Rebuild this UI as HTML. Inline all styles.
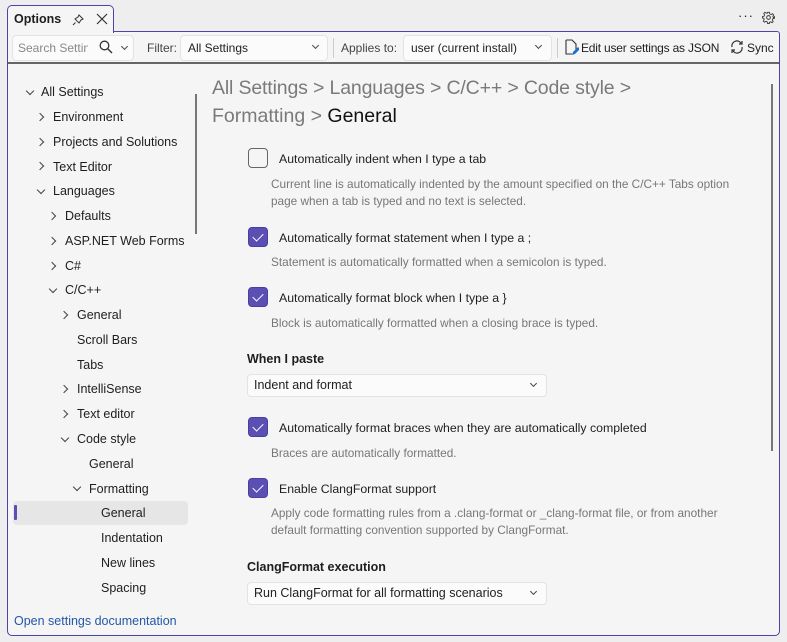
<!DOCTYPE html>
<html><head><meta charset="utf-8"><style>
*{box-sizing:border-box;margin:0;padding:0}
body{width:787px;height:642px;background:#eeeeee;font-family:"Liberation Sans",sans-serif;font-size:12.5px;color:#1e1e1e;position:relative;overflow:hidden}
.a{position:absolute;white-space:nowrap}
.frame{position:absolute;left:7px;top:31px;width:773px;height:605px;border:1.5px solid #4e43a8;border-radius:0 3px 5px 5px;background:#f5f5f5}
.tab{position:absolute;left:7px;top:5px;width:107px;height:28px;border:1.5px solid #4e43a8;border-bottom:none;border-radius:5px 5px 0 0;background:#f5f5f5;z-index:2}
.box{position:absolute;background:#fbfbfb;border:1px solid #e3e3e3;border-radius:4px}
.chev{position:absolute;width:6px;height:6px;border-right:1.3px solid #444;border-bottom:1.3px solid #444}
.r{transform:rotate(-45deg)}.d{transform:rotate(45deg)}
.cb{position:absolute;left:248px;width:20px;height:20px;border-radius:4px;background:#5b4fb3;border:1px solid #4a3fa0}
.cb::after{content:"";position:absolute;left:6px;top:3px;width:5px;height:9px;border-right:1.6px solid #fff;border-bottom:1.6px solid #fff;transform:rotate(45deg)}
.lbl{position:absolute;left:279px;font-size:12.3px;color:#1e1e1e}
.desc{position:absolute;left:271px;font-size:11.8px;color:#777;line-height:17px}
.h{position:absolute;left:212px;font-size:19.5px;color:#7a7a7a}
.tb{font-size:12px}
</style></head><body>
<div class="tab"><span class="a" style="left:6px;top:6px;font-weight:bold;font-size:12.5px">Options</span>
<svg class="a" style="left:64px;top:8px" width="12" height="12" viewBox="0 0 12 12"><path d="M7 1l4 4-2 1-2 3-4-4 3-2z M3.5 8.5L1 11" fill="none" stroke="#333" stroke-width="1"/></svg>
<svg class="a" style="left:88px;top:7px" width="12" height="12" viewBox="0 0 12 12"><path d="M1 1l10 10M11 1L1 11" stroke="#333" stroke-width="1.2"/></svg></div>
<span class="a" style="left:738px;top:8px;font-size:13px;letter-spacing:1px">···</span>
<svg class="a" style="left:762px;top:11px" width="13" height="13" viewBox="0 0 14 14"><circle cx="7" cy="7" r="2" fill="none" stroke="#333"/><path d="M6 1h2l.4 1.8 1.6.8 1.6-1 1.4 1.4-1 1.6.7 1.6L14 6v2l-1.8.4-.7 1.6 1 1.6-1.4 1.4-1.6-1-1.6.7L8 14H6l-.4-1.8L4 11.5l-1.6 1L1 11.1l1-1.6L1.7 8 0 7.6V6l1.8-.4.7-1.6-1-1.6L2.9 1l1.6 1L6 1.8z" fill="none" stroke="#333" stroke-width="1" transform="scale(.93) translate(.5 .5)"/></svg>
<div class="frame"></div>
<div class="box" style="left:12px;top:35px;width:122px;height:26px"></div>
<span class="a tb" style="left:18px;top:41px;color:#888;width:70px;overflow:hidden">Search Settings</span>
<svg class="a" style="left:99px;top:40px" width="14" height="14" viewBox="0 0 14 14"><circle cx="5.5" cy="5.5" r="4.3" fill="none" stroke="#333" stroke-width="1.3"/><path d="M8.6 8.6L13 13" stroke="#333" stroke-width="1.4"/></svg>
<div class="chev d" style="left:122px;top:44px;width:5px;height:5px"></div>
<span class="a tb" style="left:147px;top:41px;color:#444">Filter:</span>
<div class="box" style="left:180px;top:35px;width:148px;height:26px"></div>
<span class="a tb" style="left:188px;top:41px">All Settings</span>
<div class="chev d" style="left:313px;top:43px;width:5px;height:5px"></div>
<div class="a" style="left:333px;top:38px;width:1px;height:20px;background:#ccc"></div>
<span class="a tb" style="left:341px;top:41px;color:#444">Applies to:</span>
<div class="box" style="left:403px;top:35px;width:149px;height:26px"></div>
<span class="a tb" style="left:411px;top:41px">user (current install)</span>
<div class="chev d" style="left:536px;top:43px;width:5px;height:5px"></div>
<div class="a" style="left:557px;top:38px;width:1px;height:20px;background:#ccc"></div>
<svg class="a" style="left:565px;top:39px" width="14" height="17" viewBox="0 0 14 17"><path d="M1 1h6l4 4v6M1 1v14h6" fill="none" stroke="#333" stroke-width="1.1"/><path d="M7 16l1-3 5-5 2 2-5 5z" fill="#1f6fd1"/></svg>
<span class="a tb" style="left:581px;top:41px;letter-spacing:-.2px">Edit user settings as JSON</span>
<svg class="a" style="left:730px;top:40px" width="14" height="14" viewBox="0 0 14 14"><path d="M11.5 4A5 5 0 0 0 2 7M2.5 10A5 5 0 0 0 12 7M9 4h3V1M5 10H2v3" fill="none" stroke="#333" stroke-width="1.2"/></svg>
<span class="a tb" style="left:747px;top:41px">Sync</span>
<div class="a" style="left:8px;top:62px;width:771px;height:1.5px;background:#666"></div>

<div class="chev d" style="left:27px;top:88px"></div><span class="a" style="left:41px;top:85px">All Settings</span>
<div class="chev r" style="left:37px;top:114px"></div><span class="a" style="left:53px;top:110px">Environment</span>
<div class="chev r" style="left:37px;top:139px"></div><span class="a" style="left:53px;top:135px">Projects and Solutions</span>
<div class="chev r" style="left:37px;top:163px"></div><span class="a" style="left:53px;top:160px">Text Editor</span>
<div class="chev d" style="left:38px;top:187px"></div><span class="a" style="left:53px;top:184px">Languages</span>
<div class="chev r" style="left:49px;top:213px"></div><span class="a" style="left:65px;top:209px">Defaults</span>
<div class="chev r" style="left:49px;top:238px"></div><span class="a" style="left:65px;top:234px">ASP.NET Web Forms</span>
<div class="chev r" style="left:49px;top:263px"></div><span class="a" style="left:65px;top:259px">C#</span>
<div class="chev d" style="left:50px;top:286px"></div><span class="a" style="left:65px;top:283px">C/C++</span>
<div class="chev r" style="left:61px;top:312px"></div><span class="a" style="left:77px;top:308px">General</span>
<span class="a" style="left:77px;top:333px">Scroll Bars</span>
<span class="a" style="left:77px;top:358px">Tabs</span>
<div class="chev r" style="left:61px;top:386px"></div><span class="a" style="left:77px;top:382px">IntelliSense</span>
<div class="chev r" style="left:61px;top:411px"></div><span class="a" style="left:77px;top:407px">Text editor</span>
<div class="chev d" style="left:62px;top:435px"></div><span class="a" style="left:77px;top:432px">Code style</span>
<span class="a" style="left:89px;top:457px">General</span>
<div class="chev d" style="left:74px;top:484px"></div><span class="a" style="left:89px;top:482px">Formatting</span>
<div class="a" style="left:13px;top:501px;width:175px;height:24px;background:#e6e6e6;border-radius:4px"></div>
<div class="a" style="left:14px;top:505px;width:2.5px;height:15px;background:#5b4fb3;border-radius:1px"></div>
<span class="a" style="left:101px;top:506px">General</span>
<span class="a" style="left:101px;top:531px">Indentation</span>
<span class="a" style="left:101px;top:556px">New lines</span>
<span class="a" style="left:101px;top:581px">Spacing</span>
<span class="a" style="left:14px;top:614px;color:#2457a8">Open settings documentation</span>
<div class="a" style="left:195px;top:94px;width:2px;height:140px;background:#777"></div>
<div class="a" style="left:771px;top:84px;width:2px;height:367px;background:#777"></div>

<div class="h" style="top:77px;letter-spacing:-.15px">All Settings &gt; Languages &gt; C/C++ &gt; Code style &gt;</div>
<div class="h" style="top:105px">Formatting &gt; <span style="color:#111">General</span></div>

<div class="a" style="left:248px;top:148px;width:20px;height:20px;border:1.5px solid #666;border-radius:4px;background:#f5f5f5"></div>
<span class="lbl" style="top:152px">Automatically indent when I type a tab</span>
<div class="desc" style="top:176px">Current line is automatically indented by the amount specified on the C/C++ Tabs option<br>page when a tab is typed and no text is selected.</div>

<div class="cb" style="top:227px"></div>
<span class="lbl" style="top:231px">Automatically format statement when I type a ;</span>
<div class="desc" style="top:254px">Statement is automatically formatted when a semicolon is typed.</div>

<div class="cb" style="top:287px"></div>
<span class="lbl" style="top:291px">Automatically format block when I type a }</span>
<div class="desc" style="top:315px">Block is automatically formatted when a closing brace is typed.</div>

<span class="a" style="left:247px;top:352px;font-weight:bold;font-size:12.5px">When I paste</span>
<div class="box" style="left:247px;top:374px;width:300px;height:23px"></div>
<span class="a" style="left:254px;top:378px">Indent and format</span>
<div class="chev d" style="left:531px;top:381px;width:5px;height:5px"></div>

<div class="cb" style="top:417px"></div>
<span class="lbl" style="top:421px">Automatically format braces when they are automatically completed</span>
<div class="desc" style="top:445px">Braces are automatically formatted.</div>

<div class="cb" style="top:478px"></div>
<span class="lbl" style="top:482px">Enable ClangFormat support</span>
<div class="desc" style="top:505px">Apply code formatting rules from a .clang-format or _clang-format file, or from another<br>default formatting convention supported by ClangFormat.</div>

<span class="a" style="left:247px;top:560px;font-weight:bold;font-size:12.5px">ClangFormat execution</span>
<div class="box" style="left:247px;top:582px;width:300px;height:23px"></div>
<span class="a" style="left:254px;top:586px">Run ClangFormat for all formatting scenarios</span>
<div class="chev d" style="left:531px;top:589px;width:5px;height:5px"></div>
</body></html>
